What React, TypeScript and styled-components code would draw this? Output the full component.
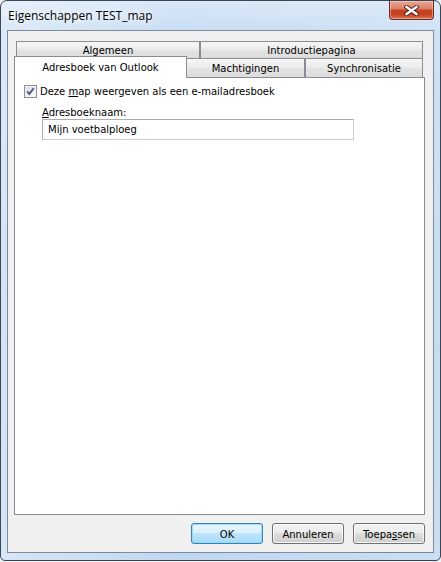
import React from "react";
import styled, { createGlobalStyle } from "styled-components";

const Global = createGlobalStyle`
  html, body { margin: 0; padding: 0; background: #eef1f5; }
  body { font-family: "DejaVu Sans", Tahoma, sans-serif; font-size: 10px; color: #000; }
  *, *::before, *::after { box-sizing: border-box; }
`;

const Window = styled.div`
  width: 441px;
  height: 561px;
  border: 1px solid #3a4656;
  border-radius: 7px 7px 5px 5px;
  background: linear-gradient(90deg, rgba(255,255,255,0.35) 0%, rgba(255,255,255,0) 40%, rgba(255,255,255,0.15) 100%),
    linear-gradient(180deg, #d9e8f8 0px, #c8ddf3 30px, #bdd5ef 60%, #c2d8f0 100%);
  padding: 0 6px 7px 6px;
  display: flex;
  flex-direction: column;
  overflow: hidden;
`;

const TitleBar = styled.div`
  height: 29px;
  display: flex;
  justify-content: space-between;
  align-items: flex-start;
  flex-shrink: 0;
`;

const Title = styled.div`
  line-height: 29px;
  padding-left: 1px;
  font-family: "Open Sans", "Noto Sans", sans-serif;
  font-size: 12px;
  color: #000;
  text-shadow: 0 0 6px #ffffff, 0 0 10px #ffffff;
`;

const CloseButton = styled.div`
  width: 45px;
  height: 19px;
  border: 1px solid #6b2a1c;
  border-top: none;
  border-radius: 0 0 4px 4px;
  background: linear-gradient(180deg, #e9a996 0%, #db7c65 45%, #c4401f 50%, #c54222 75%, #d9745a 100%);
  box-shadow: inset 0 0 0 1px rgba(255, 220, 210, 0.45);
  display: flex;
  align-items: center;
  justify-content: center;
`;

const Client = styled.div`
  flex: 1;
  border: 1px solid #7d8a9b;
  background: #f0f0f0;
  display: flex;
  flex-direction: column;
  padding: 10px 8px 8px 6px;
`;

const TopRow = styled.div`
  display: flex;
  height: 17px;
  margin-left: 2px;
  flex-shrink: 0;
`;

const BottomRow = styled.div`
  display: flex;
  height: 19px;
  align-items: flex-end;
  flex-shrink: 0;
`;

const Tab = styled.div<{ $w: number; $noLeft?: boolean }>`
  width: ${(p) => p.$w}px;
  height: 100%;
  border: 1px solid #898c95;
  border-bottom: none;
  ${(p) => (p.$noLeft ? "border-left: none;" : "")}
  background: linear-gradient(180deg, #f6f6f6 0%, #ececec 45%, #e2e2e2 55%, #dcdcdc 100%);
  display: flex;
  align-items: center;
  justify-content: center;
  padding-top: 1px;
  white-space: nowrap;
`;

const ActiveTab = styled.div<{ $w: number }>`
  position: relative;
  z-index: 1;
  width: ${(p) => p.$w}px;
  height: 22px;
  margin-bottom: -1px;
  border: 1px solid #898c95;
  border-bottom: none;
  background: #ffffff;
  display: flex;
  align-items: center;
  justify-content: center;
  white-space: nowrap;
`;

const Panel = styled.div`
  flex: 1;
  border: 1px solid #898c95;
  background: #ffffff;
  padding: 7px 9px;
  display: flex;
  flex-direction: column;
`;

const CheckRow = styled.div`
  display: flex;
  align-items: center;
  gap: 3px;
  height: 13px;
`;

const Indent = styled.div`
  margin-left: 18px;
  margin-top: 9px;
  display: flex;
  flex-direction: column;
`;

const FieldLabel = styled.div`
  line-height: 12px;
  height: 12px;
`;

const TextBox = styled.input`
  width: 312px;
  height: 21px;
  border: 1px solid #abadb3;
  border-right-color: #c8cbd2;
  border-bottom-color: #c8cbd2;
  padding: 0 5px;
  margin: 0;
  font-family: "DejaVu Sans", Tahoma, sans-serif;
  font-size: 10px;
  color: #000;
  background: #fff;
  outline: none;
`;

const ButtonRow = styled.div`
  display: flex;
  justify-content: flex-end;
  gap: 9px;
  margin-top: 8px;
  height: 21px;
  flex-shrink: 0;
`;

const Button = styled.div<{ $default?: boolean }>`
  width: 72px;
  height: 21px;
  border: 1px solid ${(p) => (p.$default ? "#3c7fb1" : "#707070")};
  border-radius: 3px;
  background: ${(p) =>
    p.$default
      ? "linear-gradient(180deg, #eaf6fd 0%, #d9f0fc 50%, #bee6fd 50%, #a7d9f5 100%)"
      : "linear-gradient(180deg, #f2f2f2 0%, #ebebeb 50%, #dddddd 50%, #cfcfcf 100%)"};
  box-shadow: inset 0 0 0 1px ${(p) => (p.$default ? "rgba(140,220,255,0.9)" : "rgba(252,252,252,0.85)")};
  display: flex;
  align-items: center;
  justify-content: center;
  padding-top: 1px;
`;

const U = styled.span`
  text-decoration: underline;
  text-underline-offset: 1px;
`;

const CloseGlyph = () => (
  <svg width="15" height="11" viewBox="0 0 15 11">
    <path d="M2.5 2 L12.5 9 M12.5 2 L2.5 9" stroke="#4a1a10" strokeWidth="4.2" strokeLinecap="square" />
    <path d="M2.5 2 L12.5 9 M12.5 2 L2.5 9" stroke="#ffffff" strokeWidth="2.4" strokeLinecap="square" />
  </svg>
);

const CheckBox = () => (
  <svg width="13" height="13" viewBox="0 0 13 13">
    <defs>
      <linearGradient id="cbg" x1="0" y1="0" x2="1" y2="1">
        <stop offset="0" stopColor="#dcdcdc" />
        <stop offset="1" stopColor="#ffffff" />
      </linearGradient>
    </defs>
    <rect x="0.5" y="0.5" width="12" height="12" fill="#f4f4f4" stroke="#8e8f8f" />
    <rect x="2" y="2" width="9" height="9" fill="url(#cbg)" />
    <path d="M3.2 6.4 L5.4 8.9 L9.8 3.2" fill="none" stroke="#4b5f95" strokeWidth="1.9" />
  </svg>
);

export default function App() {
  return (
    <>
      <Global />
      <Window>
        <TitleBar>
          <Title>Eigenschappen TEST_map</Title>
          <CloseButton>
            <CloseGlyph />
          </CloseButton>
        </TitleBar>
        <Client>
          <TopRow>
            <Tab $w={184}>Algemeen</Tab>
            <Tab $w={223}>Introductiepagina</Tab>
          </TopRow>
          <BottomRow>
            <ActiveTab $w={173}>Adresboek van Outlook</ActiveTab>
            <Tab $w={118} $noLeft>Machtigingen</Tab>
            <Tab $w={118}>Synchronisatie</Tab>
          </BottomRow>
          <Panel>
            <CheckRow>
              <CheckBox />
              <span>
                Deze <U>m</U>ap weergeven als een e-mailadresboek
              </span>
            </CheckRow>
            <Indent>
              <FieldLabel>
                <U>A</U>dresboeknaam:
              </FieldLabel>
              <TextBox readOnly value="Mijn voetbalploeg" />
            </Indent>
          </Panel>
          <ButtonRow>
            <Button $default>OK</Button>
            <Button>Annuleren</Button>
            <Button>
              Toepa<U>s</U>sen
            </Button>
          </ButtonRow>
        </Client>
      </Window>
    </>
  );
}
